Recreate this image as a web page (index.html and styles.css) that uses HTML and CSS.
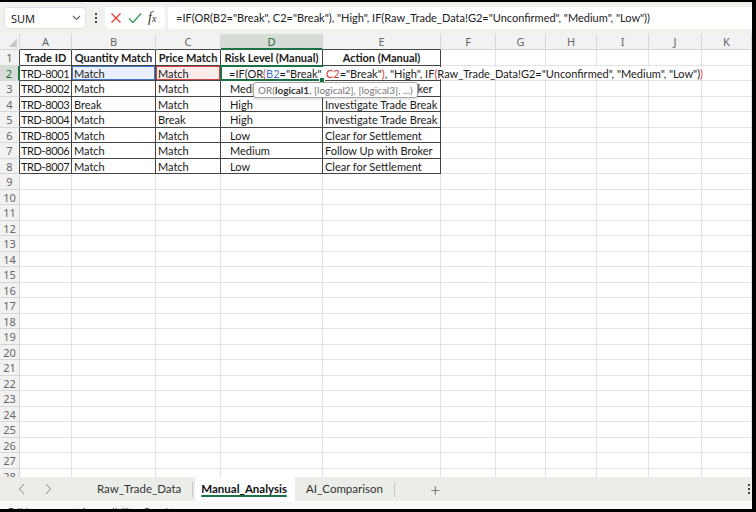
FILE: index.html
```html
<!DOCTYPE html>
<html lang="en">
<head>
  <meta charset="UTF-8">
  <title>Manual_Analysis</title>
  <link rel="stylesheet" href="styles.css">
</head>
<body>

  <div class="app">

    <div class="formula-bar">
      <div class="name-box">
        <span>SUM</span>
        <svg width="9" height="6" viewBox="0 0 9 6"><path d="M1 1l3.5 3.5L8 1" fill="none" stroke="#666" stroke-width="1.2"/></svg>
      </div>
      <div class="more-dots"><i></i><i></i><i></i></div>
      <div class="fx-box">
        <svg width="12" height="12" viewBox="0 0 12 12"><path d="M1.5 1.5l9 9M10.5 1.5l-9 9" stroke="#e0413e" stroke-width="1.4" fill="none"/></svg>
        <svg width="14" height="12" viewBox="0 0 14 12"><path d="M1 6.5l4 4L13 1.5" stroke="#3a9a5c" stroke-width="1.4" fill="none"/></svg>
        <span class="fx">f<sub>x</sub></span>
      </div>
      <div class="formula-input">=IF(OR(B2="Break", C2="Break"), "High", IF(Raw_Trade_Data!G2="Unconfirmed", "Medium", "Low"))</div>
    </div>

    <div class="sheet" id="sheet">
      <div class="c corner"></div>
      <div class="c ch dark">A</div>
      <div class="c ch dark">B</div>
      <div class="c ch dark">C</div>
      <div class="c ch dark sel">D</div>
      <div class="c ch dark">E</div>
      <div class="c ch">F</div>
      <div class="c ch">G</div>
      <div class="c ch">H</div>
      <div class="c ch">I</div>
      <div class="c ch">J</div>
      <div class="c ch">K</div>

      <div class="c rh dark">1</div>
      <div class="c t hd">Trade ID</div>
      <div class="c t hd">Quantity Match</div>
      <div class="c t hd">Price Match</div>
      <div class="c t hd">Risk Level (Manual)</div>
      <div class="c t hd">Action (Manual)</div>
      <div class="c"></div><div class="c"></div><div class="c"></div><div class="c"></div><div class="c"></div><div class="c"></div>

      <div class="c rh dark sel">2</div>
      <div class="c t id">TRD-8001</div>
      <div class="c t ref-blue">Match</div>
      <div class="c t ref-red">Match</div>
      <div class="c t edit">
        <span class="edit-text">=IF(OR<span class="pr">(</span><span class="b2">B2</span>="Break", <span class="c2">C2</span>="Break"<span class="pr">)</span>, "High", IF<span class="pr">(</span>Raw_Trade_Data!G2="Unconfirmed", "Medium", "Low")<span class="pr">)</span></span>
      </div>
      <div class="c t"></div>
      <div class="c"></div><div class="c"></div><div class="c"></div><div class="c"></div><div class="c"></div><div class="c"></div>

      <div class="c rh dark">3</div>
      <div class="c t id">TRD-8002</div>
      <div class="c t">Match</div>
      <div class="c t">Match</div>
      <div class="c t ind">Medium</div>
      <div class="c t">Follow Up with Broker</div>
      <div class="c"></div><div class="c"></div><div class="c"></div><div class="c"></div><div class="c"></div><div class="c"></div>

      <div class="c rh dark">4</div>
      <div class="c t id">TRD-8003</div>
      <div class="c t">Break</div>
      <div class="c t">Match</div>
      <div class="c t ind">High</div>
      <div class="c t">Investigate Trade Break</div>
      <div class="c"></div><div class="c"></div><div class="c"></div><div class="c"></div><div class="c"></div><div class="c"></div>

      <div class="c rh dark">5</div>
      <div class="c t id">TRD-8004</div>
      <div class="c t">Match</div>
      <div class="c t">Break</div>
      <div class="c t ind">High</div>
      <div class="c t">Investigate Trade Break</div>
      <div class="c"></div><div class="c"></div><div class="c"></div><div class="c"></div><div class="c"></div><div class="c"></div>

      <div class="c rh dark">6</div>
      <div class="c t id">TRD-8005</div>
      <div class="c t">Match</div>
      <div class="c t">Match</div>
      <div class="c t ind">Low</div>
      <div class="c t">Clear for Settlement</div>
      <div class="c"></div><div class="c"></div><div class="c"></div><div class="c"></div><div class="c"></div><div class="c"></div>

      <div class="c rh dark">7</div>
      <div class="c t id">TRD-8006</div>
      <div class="c t">Match</div>
      <div class="c t">Match</div>
      <div class="c t ind">Medium</div>
      <div class="c t">Follow Up with Broker</div>
      <div class="c"></div><div class="c"></div><div class="c"></div><div class="c"></div><div class="c"></div><div class="c"></div>

      <div class="c rh dark">8</div>
      <div class="c t id">TRD-8007</div>
      <div class="c t">Match</div>
      <div class="c t">Match</div>
      <div class="c t ind">Low</div>
      <div class="c t">Clear for Settlement</div>
      <div class="c"></div><div class="c"></div><div class="c"></div><div class="c"></div><div class="c"></div><div class="c"></div>

      <div class="tooltip">OR(<b>logical1</b>, [logical2], [logical3], ...)</div>
    </div>

    <div class="tabs">
      <div class="tab-nav">
        <svg width="8" height="12" viewBox="0 0 8 12"><path d="M6 1L1.5 6 6 11" fill="none" stroke="#888" stroke-width="1"/></svg>
        <svg width="8" height="12" viewBox="0 0 8 12"><path d="M2 1l4.5 5L2 11" fill="none" stroke="#888" stroke-width="1"/></svg>
      </div>
      <div class="tab">Raw_Trade_Data</div>
      <div class="tab-sep"></div>
      <div class="tab active">Manual_Analysis</div>
      <div class="tab">AI_Comparison</div>
      <div class="tab-sep"></div>
      <div class="tab-add">+</div>
      <div class="tab-more"><i></i><i></i><i></i></div>
    </div>

    <div class="status">
      <span>Editing</span>
      <span class="acc">&#9881; Accessibility: Good to go</span>
    </div>

  </div>

  <script src="script.js"></script>
</body>
</html>
```

FILE: styles.css
```css
body {
  margin: 0; padding: 0;
  background: #000;
  font-family: "Lato", "Liberation Sans", sans-serif;
}
.app {
  width: 752px; height: 507px;
  margin: 2px 4px 3px 0;
  background: #eff1ed;
  display: flex;
  flex-direction: column;
  overflow: hidden;
}

/* formula bar */
.formula-bar {
  height: 32px;
  flex: none;
  display: flex;
  align-items: center;
  padding: 0 0 0 4px;
  box-sizing: border-box;
}
.name-box {
  width: 82px; height: 22px;
  box-sizing: border-box;
  background: #fff;
  border: 1px solid #e2e2e2;
  border-radius: 4px;
  display: flex;
  align-items: center;
  justify-content: space-between;
  padding: 0 4px 0 6px;
  font-family: "Noto Sans", sans-serif;
  font-size: 11px;
  color: #222;
}
.more-dots { width: 19px; display: flex; flex-direction: column; align-items: center; gap: 2px; }
.more-dots i, .tab-more i { display: block; width: 2px; height: 2px; background: #444; }
.fx-box {
  width: 60px; height: 22px;
  box-sizing: border-box;
  background: #fff;
  border-radius: 4px;
  display: flex;
  align-items: center;
  gap: 6px;
  padding-left: 5px;
}
.fx {
  font-family: "Liberation Serif", serif;
  font-style: italic;
  font-size: 14px;
  color: #333;
  line-height: 1;
}
.fx sub { font-size: 10px; vertical-align: 0; }
.formula-input {
  flex: 1;
  height: 22px;
  margin-left: 3px;
  background: #fff;
  border-radius: 4px 0 0 4px;
  padding-left: 8px;
  font-size: 11px;
  line-height: 22px;
  color: #222;
  white-space: nowrap;
}

/* grid */
.sheet {
  position: relative;
  flex: 1;
  overflow: hidden;
  background: #fff;
  display: grid;
  grid-template-columns: 20px 52px 84px 65px 102px 118px 55px 50px 51px 52px 53px 50px;
  grid-template-rows: 16px repeat(14, 16px 15px);
  font-size: 11px;
  color: #1a1a1a;
}
.c {
  box-sizing: border-box;
  border-right: 1px solid #e2e2e2;
  border-bottom: 1px solid #e2e2e2;
  padding: 0 2px;
  line-height: 15px;
  white-space: nowrap;
  overflow: hidden;
}
.ch, .rh, .corner {
  background: #f2f2f2;
  color: #666;
  text-align: center;
  font-family: "Noto Sans", sans-serif;
  font-size: 11px;
  border-color: #d6d6d6;
  padding: 0;
}
.corner {
  background: #f2f2f2 linear-gradient(135deg, transparent 50%, #c9c9c9 50%) no-repeat right 2px bottom 2px / 8px 8px;
}
.ch.dark { border-bottom-color: #444; }
.rh.dark { border-right-color: #444; }
.ch.sel { background: #d7dcd6; color: #1b6b3a; border-bottom: 2px solid #1e7145; }
.rh.sel { background: #d7dcd6; color: #1b6b3a; border-right: 2px solid #1e7145; }
.t { border-right-color: #444; border-bottom-color: #444; }
.hd { font-weight: bold; text-align: center; }
.ind { padding-left: 9px; }
.id { padding-left: 1px; letter-spacing: -0.4px; overflow: visible; }

.ref-blue { background: #e9effb; box-shadow: inset 0 0 0 1px #4a78d0; }
.ref-red { background: #fbecec; box-shadow: inset 0 0 0 1px #d04848; }

.edit { position: relative; overflow: visible; z-index: 2; }
.edit::before {
  content: "";
  position: absolute;
  left: -1px; top: -1px; right: -1px; bottom: -1px;
  border: 2px solid #1e7145;
  z-index: 1;
}
.edit::after {
  content: "";
  position: absolute;
  right: -3px; bottom: -3px;
  width: 4px; height: 4px;
  background: #1e7145;
  border: 1px solid #fff;
  z-index: 4;
}
.edit-text {
  position: absolute;
  left: 6px; top: 1px;
  height: 12px;
  line-height: 13px;
  padding: 0 6px 0 2px;
  background: #fff;
  z-index: 2;
}
.edit-text .b2 { color: #3f6fd0; }
.edit-text .c2, .edit-text .pr { color: #d0393b; }

.tooltip {
  position: absolute;
  left: 253px; top: 48px;
  height: 16px;
  box-sizing: border-box;
  padding: 0 4px;
  background: #fff;
  border: 1px solid #a8a8a8;
  border-radius: 3px;
  box-shadow: 0 1px 3px rgba(0,0,0,0.18);
  font-size: 10px;
  line-height: 14px;
  color: #777;
  white-space: nowrap;
  z-index: 5;
}
.tooltip b { color: #333; }

/* sheet tabs */
.tabs {
  height: 24px;
  flex: none;
  display: flex;
  align-items: center;
  background: #ebede8;
  font-size: 11.5px;
  color: #333;
}
.tab-nav { width: 86px; display: flex; gap: 18px; padding-left: 18px; box-sizing: border-box; }
.tab { padding: 0 11px; line-height: 22px; }
.tab.active {
  align-self: stretch;
  background: #fff;
  color: #111;
  font-weight: bold;
  border-radius: 4px 4px 0 0;
  position: relative;
  padding: 1px 8px 0 6px;
  margin-left: 2px;
}
.tab.active::after {
  content: "";
  position: absolute;
  left: 6px; right: 8px; bottom: 4px;
  height: 2px;
  border-radius: 2px;
  background: #1e7145;
}
.tab-sep { width: 1px; height: 15px; background: #c8c8c8; }
.tab-add { font-size: 18px; color: #444; padding-left: 35px; font-weight: 300; }
.tab-more { margin-left: auto; margin-right: 2px; display: flex; flex-direction: column; gap: 2px; }

.status {
  height: 8px;
  flex: none;
  overflow: hidden;
  background: #f8f8f6;
  font-family: "Noto Sans", sans-serif;
  font-size: 10px;
  line-height: 14px;
  color: #444;
  padding: 4px 0 0 8px;
  box-sizing: border-box;
}
.status .acc { margin-left: 26px; }
```

FILE: script.js
```js
// blank rows 9-28 below the table
const sheet = document.getElementById("sheet");
const tip = sheet.querySelector(".tooltip");
for (let r = 9; r <= 28; r++) {
  const head = document.createElement("div");
  head.className = "c rh";
  head.textContent = r;
  sheet.insertBefore(head, tip);
  for (let col = 0; col < 11; col++) {
    const cell = document.createElement("div");
    cell.className = "c";
    sheet.insertBefore(cell, tip);
  }
}
```
